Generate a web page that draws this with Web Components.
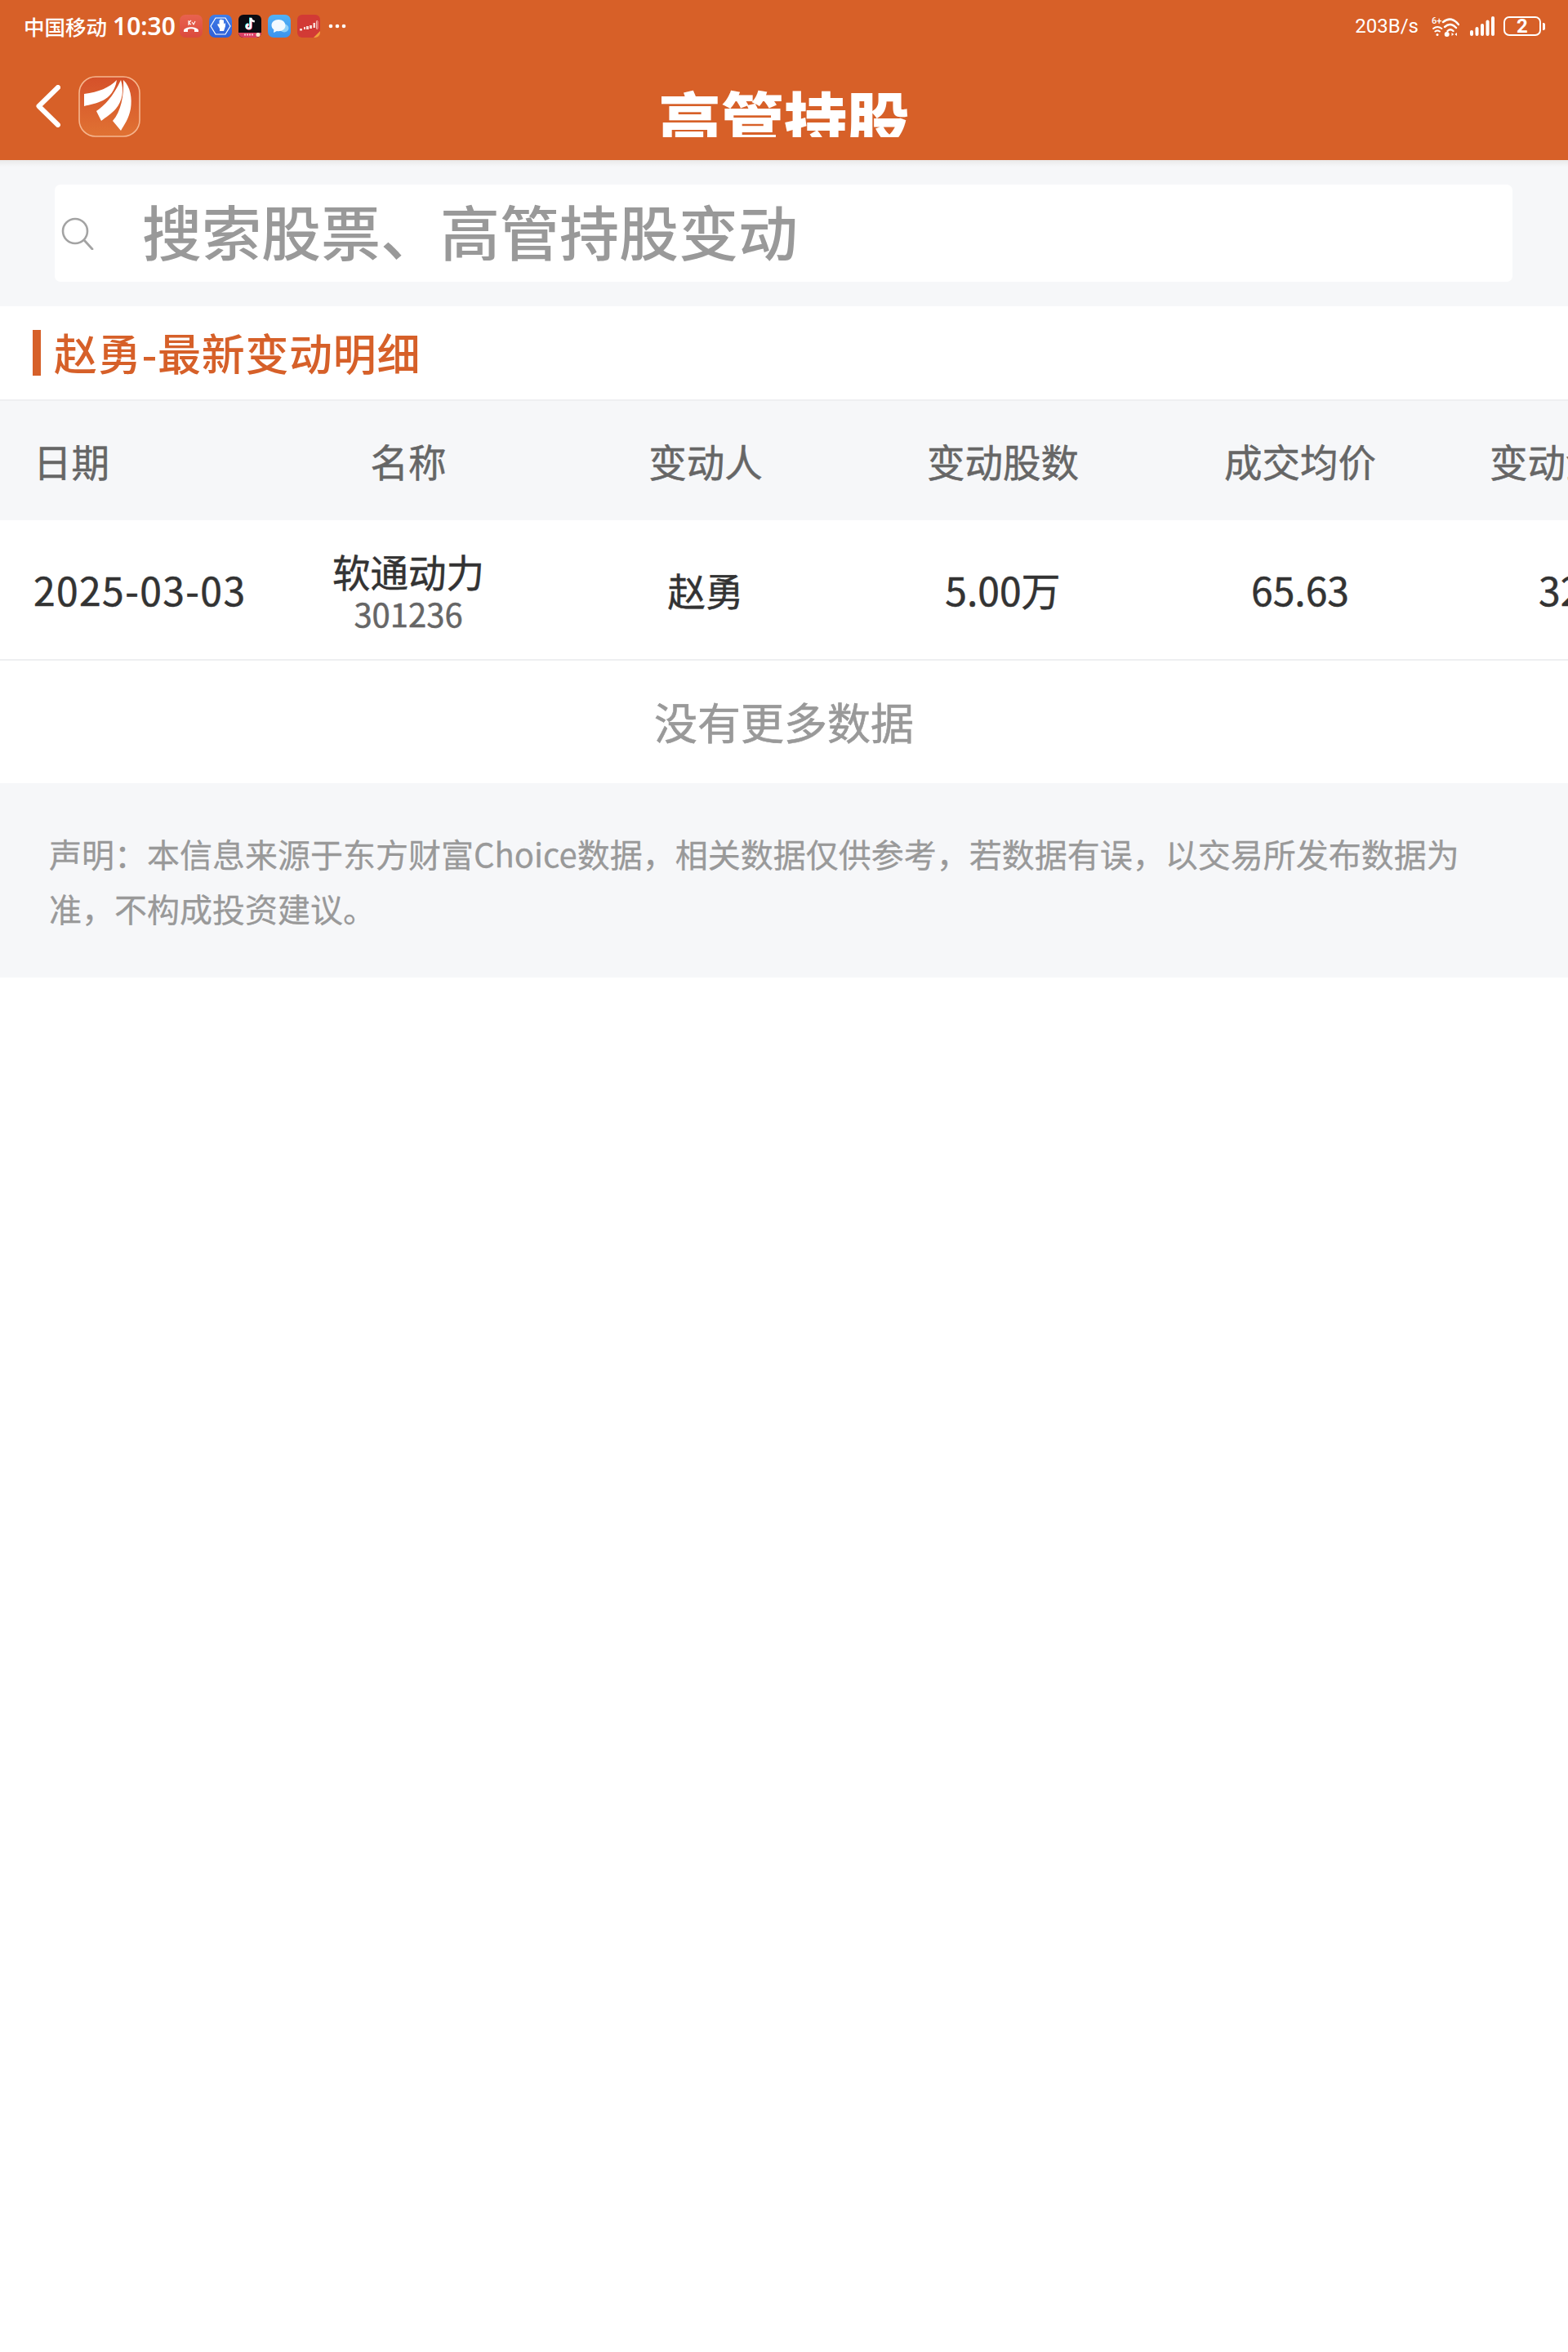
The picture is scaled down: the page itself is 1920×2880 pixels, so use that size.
<!DOCTYPE html>
<html lang="zh">
<head>
<meta charset="utf-8">
<title>高管持股</title>
<style>
    html,body{margin:0;padding:0;background:#fff;}
    body{font-family:"Noto Sans CJK SC","Noto Sans",sans-serif;width:1920px;height:2880px;overflow:hidden;}
    app-page{width:1920px;}
</style>
</head>
<body>
<template id="statusTemplate">
    <style>
        :host{display:flex;align-items:center;justify-content:space-between;height:64px;padding:0 28px 0 29px;color:#fff;box-sizing:border-box;}
        .side{display:flex;align-items:center;}
        .carrier{font-size:25.500px;font-weight:500;line-height:30px;white-space:nowrap;}
        .time{font-family:"Noto Sans","Noto Sans CJK SC",sans-serif;font-size:30px;font-weight:600;line-height:30px;margin:0 8px 0 7px;width:74px;white-space:nowrap;}
        .apps{display:flex;gap:8px;}
        .apps svg{display:block;width:28px;height:28px;}
        .more{display:block;margin-left:10px;}
        .speed{font-family:"Roboto",sans-serif;font-size:24px;line-height:30px;margin-right:16px;}
        .wifi{margin-right:13px;display:block;}
        .signal{margin-right:11px;display:block;}
        .battery{display:flex;align-items:center;}
        .cell{box-sizing:border-box;width:46px;height:24px;border:2px solid #fff;border-radius:7px;display:flex;align-items:center;justify-content:center;font-family:"Roboto",sans-serif;font-size:24px;font-weight:700;line-height:20px;}
        .tip{width:3px;height:9px;background:#fff;border-radius:0 2px 2px 0;margin-left:2px;}
    </style>
    <div class="side">
        <span class="carrier">中国移动</span>
        <span class="time">10:30</span>
        <div class="apps">
            <svg viewBox="0 0 28 28">
                <defs><linearGradient id="a1" x1="0" y1="0" x2="0" y2="1"><stop offset="0" stop-color="#e8624f"/><stop offset="1" stop-color="#db4a3d"/></linearGradient></defs>
                <rect width="28" height="28" rx="7" fill="url(#a1)"/>
                <path d="M5 19c2-5 16-5 18 0v2h-5v-3c-2-1-6-1-8 0v3H5z" fill="#fff"/>
                <path d="M11 7v6M11 10l3-3M11 10l3 2M15 9l2 3 2-4" stroke="#fff" stroke-width="1.100" fill="none"/>
            </svg>
            <svg viewBox="0 0 28 28">
                <defs><linearGradient id="a2" x1="0" y1="0" x2="0" y2="1"><stop offset="0" stop-color="#3f7de8"/><stop offset="1" stop-color="#2f5fd8"/></linearGradient></defs>
                <rect width="28" height="28" rx="7" fill="url(#a2)"/>
                <path d="M8 4h12l6 10-6 10H8L2 14z" fill="none" stroke="#fff" stroke-width="1.200"/>
                <path d="M10 12l3 5v3h5l2-6v-3l-1-1-1 2V7l-1.200-1-1 1V6l-1.300-.500L12.500 7v5l-1-1z" fill="#fff"/>
            </svg>
            <svg viewBox="0 0 28 28">
                <rect width="28" height="28" rx="6" fill="#0b0b12"/>
                <path d="M0 22h28v0c0 3-3 6-6 6H6c-3 0-6-3-6-6z" fill="#d93f63"/>
                <path d="M15 4v10.500a2.500 2.500 0 1 1-2.500-2.500" stroke="#25f4ee" stroke-width="2.600" fill="none" transform="translate(-.6 -.4)"/>
                <path d="M15 4v10.500a2.500 2.500 0 1 1-2.500-2.500" stroke="#fe2c55" stroke-width="2.600" fill="none" transform="translate(.6 .4)"/>
                <path d="M15 4v10.500a2.500 2.500 0 1 1-2.500-2.500" stroke="#fff" stroke-width="2.600" fill="none"/>
                <path d="M15 4c.5 2.500 2 4 4.800 4.300" stroke="#fff" stroke-width="2.400" fill="none"/>
                <path d="M7 24.500h11" stroke="#f7c4cf" stroke-width="2" stroke-dasharray="2 1"/>
                <circle cx="24" cy="24.500" r="2.500" fill="#f5e9d0"/>
            </svg>
            <svg viewBox="0 0 28 28">
                <defs><linearGradient id="a4" x1="0" y1="0" x2="0" y2="1"><stop offset="0" stop-color="#52b1f5"/><stop offset="1" stop-color="#3b93ee"/></linearGradient></defs>
                <rect width="28" height="28" rx="7" fill="url(#a4)"/>
                <ellipse cx="20" cy="16.500" rx="5.500" ry="5" fill="#8fd0f8"/>
                <path d="M13 6c-5 0-8.500 3-8.500 7 0 2.200 1 4 2.800 5.200L7 22l4-2c.6.100 1.300.200 2 .200 5 0 8.500-3 8.500-7s-3.500-7.200-8.500-7.200z" fill="#f2f9ff"/>
            </svg>
            <svg viewBox="0 0 28 28">
                <rect width="28" height="28" rx="6" fill="#d23a35"/>
                <path d="M20 28l8-8v2c0 3-3 6-6 6z" fill="#f0a03c"/>
                <rect x="3" y="17" width="3" height="2.500" fill="#f7dcd6"/>
                <rect x="8" y="15" width="2" height="3" fill="#f7dcd6"/>
                <rect x="11" y="14" width="3" height="4" fill="#f7dcd6"/>
                <rect x="15" y="13" width="3" height="4" fill="#f7dcd6"/>
                <rect x="19.500" y="10" width="2.500" height="6" fill="#f7dcd6"/>
                <rect x="23.500" y="7.500" width="1.500" height="10" rx=".7" fill="none" stroke="#f7dcd6" stroke-width=".8"/>
            </svg>
        </div>
        <svg class="more" width="22" height="6" viewBox="0 0 22 6"><circle cx="3" cy="3" r="2.300" fill="#fff"/><circle cx="11" cy="3" r="2.300" fill="#fff"/><circle cx="19" cy="3" r="2.300" fill="#fff"/></svg>
    </div>
    <div class="side">
        <span class="speed">203B/s</span>
        <svg class="wifi" width="34" height="25" viewBox="0 0 34 25">
            <text x="0" y="9" font-family="Roboto,sans-serif" font-size="11" font-weight="500" fill="#fff">6+</text>
            <path d="M14 7Q24-1 33 10M16 13Q23 6.500 30 14M19.500 18Q23 14.500 26.500 18" stroke="#fff" stroke-width="2.400" fill="none" stroke-linecap="round"/>
            <path d="M2 15Q7 11 12.500 15M4.300 18.500Q7 16.500 10 18.500" stroke="#fff" stroke-width="1.900" fill="none" stroke-linecap="round"/>
            <circle cx="7" cy="22.500" r="1.500" fill="#fff"/>
            <circle cx="18.700" cy="22" r="3" fill="#fff"/>
            <path d="M24.500 20l2.700 2-2.700 2zM31 20l-2.700 2 2.700 2z" fill="#fff"/>
        </svg>
        <svg class="signal" width="30" height="24" viewBox="0 0 30 24">
            <rect x="0" y="17" width="4" height="7" rx="2" fill="#fff"/>
            <rect x="6.500" y="13" width="4" height="11" rx="2" fill="#fff"/>
            <rect x="13" y="9" width="4" height="15" rx="2" fill="#fff"/>
            <rect x="19.500" y="4.500" width="4" height="19.500" rx="2" fill="#fff"/>
            <rect x="26" y="0" width="4" height="24" rx="2" fill="#fff"/>
        </svg>
        <div class="battery"><div class="cell">2</div><div class="tip"></div></div>
    </div>
</template>

<template id="navTemplate">
    <style>
        :host{display:block;position:relative;height:132px;}
        .left{display:flex;align-items:center;height:132px;padding-left:44px;gap:22px;}
        .back{display:block;}
        .logo{display:block;}
        .title{position:absolute;left:0;right:0;top:36px;height:68px;overflow:hidden;text-align:center;color:#fff;font-size:77px;font-weight:900;line-height:100px;}
        .title span{display:block;margin-top:-5px;}
    </style>
    <div class="left">
        <svg class="back" width="30" height="52" viewBox="0 0 30 52"><path d="M27 3L3.500 26 27 49" fill="none" stroke="#fff" stroke-width="6" stroke-linecap="round" stroke-linejoin="round"/></svg>
        <svg class="logo" width="76" height="75" viewBox="0 0 76 75">
            <defs><linearGradient id="lg" x1="0" y1="0" x2="0" y2="1"><stop offset="0" stop-color="#d5512a"/><stop offset="1" stop-color="#e07233"/></linearGradient></defs>
            <rect x="1" y="1" width="74" height="73" rx="20" fill="url(#lg)" stroke="#f6b68f" stroke-width="1.600"/>
            <path d="M7 22C25 20 38 14 47 5 45 18 38 26 30 30 22 34 14 35 7 37z" fill="#fff"/>
            <path d="M22 43C32 36 42 26 52 5 56 18 54 30 46 40 40 47 34 50 28 55z" fill="#fff"/>
            <path d="M42 55C52 44 56 24 55 5 64 13 66 28 64 40 62 52 56 60 52 67z" fill="#fff"/>
        </svg>
    </div>
    <div class="title"><span>高管持股</span></div>
</template>

<template id="searchTemplate">
    <style>
        :host{display:block;background:#f6f7f9;padding:30px 68px 30px 67px;background-image:linear-gradient(#e9e9e9,#f6f7f9 8px);}
        .box{display:flex;align-items:center;height:119px;background:#fff;border-radius:7px;color:#999;}
        svg{display:block;margin-left:8px;}
        span{font-size:73px;font-weight:500;line-height:107px;margin:0 0 8px 59px;white-space:nowrap;}
    </style>
    <div class="box">
        <svg width="40" height="40" viewBox="0 0 40 40"><circle cx="17" cy="17" r="15" fill="none" stroke="#a3a3a3" stroke-width="2.600"/><path d="M28 28l10 11" stroke="#a3a3a3" stroke-width="2.800" stroke-linecap="round"/></svg>
        <span><slot></slot></span>
    </div>
</template>

<template id="sectionTemplate">
    <style>
        :host{display:flex;align-items:center;height:116px;padding:0 0 0 40px;background:#fff;color:#d66029;box-sizing:border-box;border-bottom:2px solid #eeeff1;}
        .bar{width:10px;height:56px;background:#d66029;margin-right:16px;flex:none;}
        span{font-size:53px;font-weight:500;line-height:56px;letter-spacing:.7px;white-space:nowrap;margin-top:-2px;}
    </style>
    <div class="bar"></div>
    <span><slot></slot></span>
</template>

<template id="tableTemplate">
    <style>
        :host{display:block;overflow:hidden;width:1920px;}
        .inner{width:2140px;}
    </style>
    <div class="inner"><slot></slot></div>
</template>

<template id="rowTemplate">
    <style>
        :host{display:grid;grid-template-columns:318px repeat(5,364px);align-items:center;box-sizing:border-box;-webkit-text-stroke:.5px currentColor;}
        :host([kind="head"]){height:146px;background:#f6f7f9;color:#666;font-size:46.500px;}
        :host([kind="body"]){height:172px;background:#fff;color:#333;font-size:48px;border-bottom:2px solid #eeeff1;}
    </style>
    <slot></slot>
</template>

<template id="cellTemplate">
    <style>
        :host{display:flex;flex-direction:column;align-items:center;justify-content:center;white-space:nowrap;}
        :host([first]){align-items:flex-start;padding-left:41px;}
        :host([date]){letter-spacing:1.400px;}
        :host([last]){align-items:flex-start;padding-left:50px;}
        :host([value]){padding-left:110px;}
        .sub{font-size:40px;line-height:50px;color:#666;}
        .main{line-height:1.2;}
        :host([stacked]) .main{font-size:46.500px;line-height:54px;}
        :host([pair]){padding-top:4px;}
    </style>
    <div class="main"><slot></slot></div>
    <div class="sub"><slot name="sub"></slot></div>
</template>

<template id="endTemplate">
    <style>
        :host{display:flex;align-items:center;justify-content:center;height:150px;background:#fff;color:#999;font-size:53px;-webkit-text-stroke:.6px currentColor;padding-bottom:2px;box-sizing:border-box;}
    </style>
    <slot></slot>
</template>

<template id="noteTemplate">
    <style>
        :host{display:block;background:#f6f7f9;color:#999;font-size:40px;line-height:67px;padding:53px 120px 51px 60px;-webkit-text-stroke:.3px currentColor;}
    </style>
    <slot></slot>
</template>

<template id="pageTemplate">
    <style>
        :host{display:block;background:#fff;}
        .top{background:#d76028;height:196px;overflow:hidden;}
    </style>
    <div class="top"><slot name="top"></slot></div>
    <slot></slot>
</template>

<app-page>
    <div slot="top">
        <status-bar></status-bar>
        <nav-bar></nav-bar>
    </div>
    <search-box>搜索股票、高管持股变动</search-box>
    <section-title>赵勇-最新变动明细</section-title>
    <data-table>
        <data-row kind="head">
            <data-cell first>日期</data-cell>
            <data-cell>名称</data-cell>
            <data-cell>变动人</data-cell>
            <data-cell>变动股数</data-cell>
            <data-cell>成交均价</data-cell>
            <data-cell last>变动金额</data-cell>
        </data-row>
        <data-row kind="body">
            <data-cell first date>2025-03-03</data-cell>
            <data-cell stacked pair>软通动力<span slot="sub">301236</span></data-cell>
            <data-cell stacked>赵勇</data-cell>
            <data-cell>5.00万</data-cell>
            <data-cell>65.63</data-cell>
            <data-cell last value>328.15万</data-cell>
        </data-row>
    </data-table>
    <end-tip>没有更多数据</end-tip>
    <legal-note>声明&#xFF1A;本信息来源于东方财富Choice数据&#xFF0C;相关数据仅供参考&#xFF0C;若数据有误&#xFF0C;以交易所发布数据为准&#xFF0C;不构成投资建议。</legal-note>
</app-page>

<script>
    (function registerAll(customElements) {
        'use strict';

        // every element here is just a template stamped into an open shadow root
        function define(tag, templateId) {
            customElements.define(tag, class extends HTMLElement {
                constructor() {
                    super();
                    const shadowRoot = this.attachShadow({mode: 'open'});
                    const templ = document.querySelector('#' + templateId);
                    shadowRoot.appendChild(document.importNode(templ.content, true));
                }
            });
        }

        define('status-bar', 'statusTemplate');
        define('nav-bar', 'navTemplate');
        define('search-box', 'searchTemplate');
        define('section-title', 'sectionTemplate');
        define('data-table', 'tableTemplate');
        define('data-row', 'rowTemplate');
        define('data-cell', 'cellTemplate');
        define('end-tip', 'endTemplate');
        define('legal-note', 'noteTemplate');
        define('app-page', 'pageTemplate');
    })(window.customElements);
</script>
</body>
</html>
